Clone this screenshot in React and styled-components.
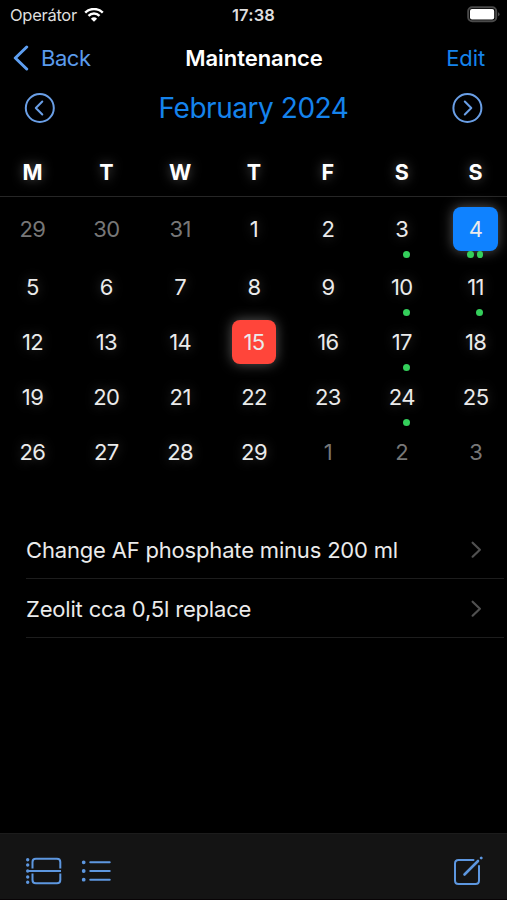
import styled, { createGlobalStyle } from "styled-components";

const GlobalStyle = createGlobalStyle`
  * {
    box-sizing: border-box;
  }

  body {
    margin: 0;
    background-color: #000;
    overflow: hidden;
  }
`;

const Screen = styled.div`
  display: flex;
  flex-direction: column;
  width: 507px;
  height: 900px;
  overflow: hidden;
  background-color: #000;
  color: #ebebeb;
  font-family: Inter, "Liberation Sans", sans-serif;
  font-size: 22px;
  line-height: 1;
  white-space: nowrap;

  svg {
    display: block;
    flex: none;
    fill: none;
    stroke-linecap: round;
    stroke-linejoin: round;
  }
`;

/* three columns, so the middle one stays centered */
const Bar = styled.div`
  display: grid;
  grid-template-columns: 1fr auto 1fr;
  align-items: center;
  flex: none;
`;

const StatusBar = styled(Bar)`
  height: 30px;
  padding: 0 7px 0 10px;
  color: #dedede;
`;

const NavBar = styled(Bar)`
  height: 56px;
  padding: 0 12px 0 13px;
`;

const MonthBar = styled(Bar)`
  height: 44px;
  padding: 0 24px;
`;

const Side = styled.div`
  display: flex;
  align-items: center;
  justify-content: ${(props) => (props.$end ? "flex-end" : "flex-start")};
  gap: ${(props) => props.$gap || 0}px;
`;

const Carrier = styled.span`
  font-size: 16.5px;
  letter-spacing: -0.28px;
`;

const Clock = styled.span`
  margin-right: 3px;
  font-size: 16.5px;
  font-weight: 600;
  letter-spacing: 0.2px;
`;

const BackLabel = styled.span`
  color: #5b9bec;
  letter-spacing: -0.45px;
`;

const NavTitle = styled.span`
  color: #fff;
  font-weight: 600;
  letter-spacing: -0.05px;
`;

const EditLabel = styled.span`
  margin-right: 10px;
  color: #1583ec;
  letter-spacing: -0.1px;
`;

const MonthTitle = styled.span`
  color: #1583ec;
  font-size: 28px;
  letter-spacing: -0.45px;
`;

const Weekdays = styled.div`
  display: grid;
  grid-template-columns: repeat(7, 1fr);
  align-items: center;
  flex: none;
  width: 517px;
  height: 51px;
  margin: 16px 0 0 -4.6px;
  padding-top: 1px;
  border-bottom: 1px solid #262626;
`;

const Weekday = styled.span`
  color: #fff;
  font-size: 21.5px;
  font-weight: 700;
  line-height: 22px;
  letter-spacing: -0.3px;
  text-align: center;
  text-shadow: 0 0 12px rgba(255, 255, 255, 0.35);
`;

const Days = styled.div`
  display: grid;
  grid-template-columns: repeat(7, 1fr);
  grid-template-rows: 60px repeat(4, 55.25px);
  flex: none;
  width: 517px;
  margin: 2px 0 0 -4.7px;
`;

const DayCell = styled.div`
  position: relative;
  display: flex;
  align-items: center;
  justify-content: center;
`;

const DayNumber = styled.span`
  display: flex;
  align-items: center;
  justify-content: center;
  width: 44.5px;
  height: 44.5px;
  border-radius: 8px;
  color: ${(props) => (props.$muted ? "#777" : "#ebebeb")};
  letter-spacing: -0.6px;
  text-indent: 0.5px;
  background-color: ${(props) => props.$fill || "transparent"};
  box-shadow: ${(props) =>
    props.$fill ? "0 0 13px rgba(255, 255, 255, 0.35)" : "none"};
  text-shadow: ${(props) =>
    props.$fill || props.$muted
      ? "none"
      : "0 0 12px rgba(255, 255, 255, 0.25)"};
`;

const Dots = styled.div`
  position: absolute;
  top: calc(50% + 22px);
  left: calc(50% - 8px);
  display: flex;
  justify-content: flex-end;
  gap: 2.5px;
  width: 16px;
`;

const Dot = styled.span`
  width: 7px;
  height: 7px;
  border-radius: 50%;
  background-color: #34cf5b;
`;

const TaskList = styled.div`
  display: flex;
  flex-direction: column;
  flex: 1;
  padding: 40px 3px 0 26px;
`;

const Task = styled.div`
  display: flex;
  align-items: center;
  justify-content: space-between;
  height: 59px;
  padding: 2px 22px 0 0;
  border-bottom: 1px solid #1d1d1d;
  letter-spacing: -0.18px;
`;

const Toolbar = styled.div`
  display: flex;
  align-items: center;
  justify-content: space-between;
  flex: none;
  height: 67px;
  padding: 8px 24px 0 25px;
  border-top: 1px solid #1c1c1c;
  border-bottom: 1px solid #080406;
  background-color: #141414;
`;

const WifiIcon = () => (
  <svg width="20" height="15" viewBox="0 0 20 15" stroke="#fff">
    <path
      d="M1.2 4.6a12.7 12.7 0 0 1 17.6 0M4.5 7.8a8 8 0 0 1 11 0"
      strokeWidth="2.5"
      strokeLinecap="butt"
    />
    <path
      d="M10 13.8 6.9 10.700a4.500 4.500 0 0 1 6.200 0Z"
      fill="#fff"
      stroke="none"
    />
  </svg>
);

const BatteryIcon = () => (
  <svg width="33" height="18" viewBox="0 0 33 18">
    <rect x="1.2" y="1.2" width="28" height="14" rx="4" stroke="#4a4a4a" strokeWidth="2" />
    <rect x="3" y="3" width="24.2" height="10.4" rx="2" fill="#fff" />
    <path d="M31 6.2q1.5.7 1.5 2t-1.5 2Z" fill="#4a4a4a" />
  </svg>
);

const BackIcon = () => (
  <svg width="16" height="26" viewBox="0 0 16 26" stroke="#5e9ff2">
    <path d="M13.7 2 2.3 13l11.4 11" strokeWidth="3" />
  </svg>
);

const CircleArrow = ({ next }) => (
  <svg width="31" height="31" viewBox="0 0 31 31" stroke="#6a9fe6">
    <circle cx={next ? 15.4 : 15.8} cy="15" r="14" strokeWidth="2" />
    <path
      d={next ? "m12.8 8.5 6.5 6.5-6.5 6.5" : "m18.3 8.5-6.5 6.5 6.5 6.5"}
      strokeWidth="2"
    />
  </svg>
);

const Chevron = () => (
  <svg width="11" height="18" viewBox="0 0 11 18" stroke="#505050">
    <path d="m1.6 1.7 7.3 7-7.3 7" strokeWidth="2.2" />
  </svg>
);

const DayViewIcon = () => (
  <svg width="38" height="30" viewBox="0 0 38 30" stroke="#5d97e0" strokeWidth="2">
    <path
      d="M7.5 12.5V6q0-3.3 3.3-3.3H32q3.3 0 3.3 3.3v6.5M7.5 17.5V24q0 3.3 3.3 3.3H32q3.3 0 3.3-3.3v-6.5M2 15h34"
      strokeLinecap="butt"
    />
    <path
      d="M2.7 3.8v.01M2.7 9v.01M2.7 15v.01M2.7 21v.01M2.7 26.3v.01"
      strokeWidth="3.4"
    />
  </svg>
);

const ListIcon = () => (
  <svg width="30" height="24" viewBox="0 0 30 24" stroke="#5d97e0">
    <path d="M9.3 3.3h19.4M9.3 12h19.4M9.3 20.7h19.4" strokeWidth="2.1" />
    <path d="M2.7 3.3v.01M2.7 12v.01M2.7 20.7v.01" strokeWidth="3.8" />
  </svg>
);

const ComposeIcon = () => (
  <svg width="30" height="30" viewBox="0 0 30 30" stroke="#5d97e0">
    <path
      d="M20.5 4H5.5Q2 4 2 7.5v17Q2 28 5.5 28h17q3.5 0 3.5-3.5V10"
      strokeWidth="2"
    />
    <path d="m11.5 18.5 13.5-13.5" strokeWidth="2.6" />
    <path d="m28.2 1.9.01-.01" strokeWidth="2.8" />
  </svg>
);

const weekdays = ["M", "T", "W", "T", "F", "S", "S"];

const RED = "#ff453a";
const BLUE = "#0f82ff";

// number of events for the days that have any
const events = { 3: 1, 4: 2, 10: 1, 11: 1, 17: 1, 24: 1 };
const fills = { 4: BLUE, 15: RED };

const days = [
  ...[29, 30, 31].map((day) => ({ day, muted: true })),
  ...Array.from({ length: 29 }, (_, i) => ({
    day: i + 1,
    fill: fills[i + 1],
    dots: events[i + 1] || 0,
  })),
  ...[1, 2, 3].map((day) => ({ day, muted: true })),
];

const tasks = ["Change AF phosphate minus 200 ml", "Zeolit cca 0,5l replace"];

const App = () => {
  return (
    <Screen>
      <GlobalStyle />
      {/* Status bar */}
      <StatusBar>
        <Side $gap={7}>
          <Carrier>Operátor</Carrier>
          <WifiIcon />
        </Side>
        <Clock>17:38</Clock>
        <Side $end>
          <BatteryIcon />
        </Side>
      </StatusBar>

      {/* Navigation */}
      <NavBar>
        <Side $gap={12}>
          <BackIcon />
          <BackLabel>Back</BackLabel>
        </Side>
        <NavTitle>Maintenance</NavTitle>
        <Side $end>
          <EditLabel>Edit</EditLabel>
        </Side>
      </NavBar>

      {/* Month switch */}
      <MonthBar>
        <Side>
          <CircleArrow />
        </Side>
        <MonthTitle>February 2024</MonthTitle>
        <Side $end>
          <CircleArrow next />
        </Side>
      </MonthBar>

      {/* Calendar */}
      <Weekdays>
        {weekdays.map((name, i) => (
          <Weekday key={i}>{name}</Weekday>
        ))}
      </Weekdays>
      <Days>
        {days.map(({ day, muted, fill, dots }, i) => (
          <DayCell key={i}>
            <DayNumber $muted={muted} $fill={fill}>
              {day}
            </DayNumber>
            {dots ? (
              <Dots>
                {Array.from({ length: dots }, (_, n) => (
                  <Dot key={n} />
                ))}
              </Dots>
            ) : null}
          </DayCell>
        ))}
      </Days>

      {/* Tasks of the selected day */}
      <TaskList>
        {tasks.map((title) => (
          <Task key={title}>
            {title}
            <Chevron />
          </Task>
        ))}
      </TaskList>

      {/* Bottom toolbar */}
      <Toolbar>
        <Side $gap={18}>
          <DayViewIcon />
          <ListIcon />
        </Side>
        <ComposeIcon />
      </Toolbar>
    </Screen>
  );
};

export default App;
